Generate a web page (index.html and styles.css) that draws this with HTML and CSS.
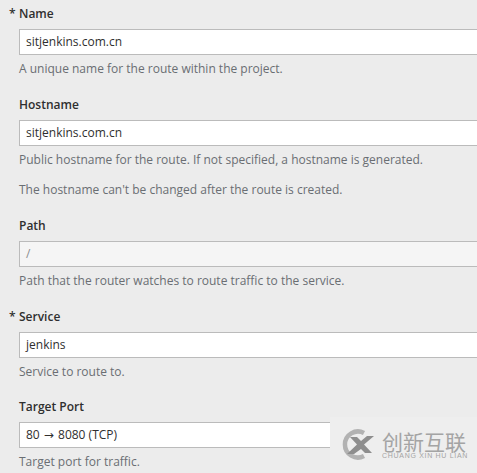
FILE: index.html
```html
<!DOCTYPE html>
<html lang="en">
<head>
  <meta charset="UTF-8">
  <meta name="viewport" content="width=device-width, initial-scale=1.0">
  <title>Create Route</title>
  <link rel="stylesheet" href="styles.css">
</head>
<body>

<form class="route-form">
  <div class="field">
    <label class="field-label required">Name</label>
    <div class="field-input">sitjenkins.com.cn</div>
    <p class="help">A unique name for the route within the project.</p>
  </div>

  <div class="field">
    <label class="field-label">Hostname</label>
    <div class="field-input">sitjenkins.com.cn</div>
    <p class="help">Public hostname for the route. If not specified, a hostname is generated.</p>
    <p class="help help-extra">The hostname can't be changed after the route is created.</p>
  </div>

  <div class="field">
    <label class="field-label">Path</label>
    <div class="field-input readonly">/</div>
    <p class="help">Path that the router watches to route traffic to the service.</p>
  </div>

  <div class="field">
    <label class="field-label required">Service</label>
    <div class="field-input">jenkins</div>
    <p class="help">Service to route to.</p>
  </div>

  <div class="field">
    <label class="field-label">Target Port</label>
    <div class="field-input">80 <span class="arrow">→</span> 8080 (TCP)</div>
    <p class="help">Target port for traffic.</p>
  </div>
</form>

<!-- watermark sits over the bottom right corner -->
<div class="watermark">
  <svg class="watermark-logo" width="32" height="31" viewBox="0 0 32 31">
    <path d="M22 4A13 13 0 1 0 22 27" fill="none" stroke="#b2b2b2" stroke-width="4.5"/>
    <path d="M8 8h7l4 4 6-5h7L22 15.500 30 24h-7l-4-4-7 5H5l10-9.500z" fill="#8e8e8e"/>
  </svg>
  <div class="watermark-text">
    <div class="watermark-cn">创新互联</div>
    <div class="watermark-en">CHUANG XIN HU LIAN</div>
  </div>
</div>

</body>
</html>
```

FILE: styles.css
```css
html, body { margin: 0; height: 473px; overflow: hidden; }
body { position: relative; background: #ececec; font-family: "Open Sans", "Noto Sans", sans-serif; font-size: 12px; color: #363636; }
.route-form { width: 520px; padding: 5px 0 0 19px; }
.field { margin-bottom: 17.75px; }
.field-label { display: block; position: relative; height: 18px; line-height: 18px; margin-bottom: 6px; font-weight: 600; color: #2f2f2f; }
.required::before { content: "*"; position: absolute; left: -10px; top: 0; }
.field-input { box-sizing: border-box; height: 26px; line-height: 24px; padding: 0 6px; background: #fff; border: 1px solid #bbb; font-size: 12px; color: #2f2f2f; }
.arrow { font-family: "DejaVu Sans", sans-serif; margin: 0 1px; }
.readonly { background: #f5f5f5; color: #8b8d8f; }
.help { margin: 5px 0 0; line-height: 18px; color: #6a6e73; }
.help-extra { margin-top: 12.3px; }
.watermark { position: absolute; right: 0; bottom: 0; width: 147px; height: 56px; box-sizing: border-box; padding: 12px 0 0 12px; display: flex; gap: 8px; background: #eeeeee; }
.watermark-logo { flex: none; }
.watermark-text { padding-top: 3px; }
.watermark-cn { font-family: "Noto Sans CJK SC", sans-serif; font-size: 21px; line-height: 18px; color: #a4a4a4; }
.watermark-en { font-family: "Liberation Sans", sans-serif; font-size: 7px; line-height: 7px; margin-top: 2px; letter-spacing: 0.7px; white-space: nowrap; color: #a4a4a4; }
```
